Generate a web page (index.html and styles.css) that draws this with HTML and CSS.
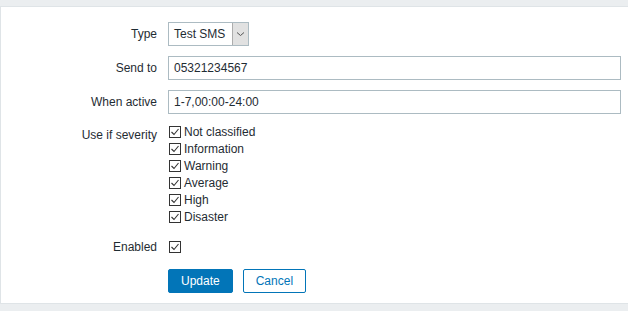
FILE: index.html
```html
<!DOCTYPE html>
<html lang="en">
<head>
    <meta charset="UTF-8">
    <title>Media</title>
    <link rel="stylesheet" href="styles.css">
</head>
<body>
    <div class="panel">
        <form class="form-list">
            <label class="form-label">Type</label>
            <div class="form-field">
                <span class="select">
                    <span class="select-value">Test SMS</span>
                    <span class="select-arrow">
                        <svg width="9" height="6" viewBox="0 0 9 6"><path d="M1 1.5 L4.5 4.5 L8 1.5" fill="none" stroke="#555" stroke-width="1"/></svg>
                    </span>
                </span>
            </div>

            <label class="form-label">Send to</label>
            <div class="form-field">
                <span class="text-input">05321234567</span>
            </div>

            <label class="form-label">When active</label>
            <div class="form-field">
                <span class="text-input">1-7,00:00-24:00</span>
            </div>

            <label class="form-label form-label-top">Use if severity</label>
            <ul class="checkbox-list">
                <li><span class="checkbox"><svg width="12" height="12" viewBox="0 0 12 12"><rect x="0.5" y="0.5" width="11" height="11" fill="#fff" stroke="#333"/><path d="M2.5 6 L5 8.5 L9.5 3" fill="none" stroke="#333" stroke-width="1.1"/></svg></span>Not classified</li>
                <li><span class="checkbox"><svg width="12" height="12" viewBox="0 0 12 12"><rect x="0.5" y="0.5" width="11" height="11" fill="#fff" stroke="#333"/><path d="M2.5 6 L5 8.5 L9.5 3" fill="none" stroke="#333" stroke-width="1.1"/></svg></span>Information</li>
                <li><span class="checkbox"><svg width="12" height="12" viewBox="0 0 12 12"><rect x="0.5" y="0.5" width="11" height="11" fill="#fff" stroke="#333"/><path d="M2.5 6 L5 8.5 L9.5 3" fill="none" stroke="#333" stroke-width="1.1"/></svg></span>Warning</li>
                <li><span class="checkbox"><svg width="12" height="12" viewBox="0 0 12 12"><rect x="0.5" y="0.5" width="11" height="11" fill="#fff" stroke="#333"/><path d="M2.5 6 L5 8.5 L9.5 3" fill="none" stroke="#333" stroke-width="1.1"/></svg></span>Average</li>
                <li><span class="checkbox"><svg width="12" height="12" viewBox="0 0 12 12"><rect x="0.5" y="0.5" width="11" height="11" fill="#fff" stroke="#333"/><path d="M2.5 6 L5 8.5 L9.5 3" fill="none" stroke="#333" stroke-width="1.1"/></svg></span>High</li>
                <li><span class="checkbox"><svg width="12" height="12" viewBox="0 0 12 12"><rect x="0.5" y="0.5" width="11" height="11" fill="#fff" stroke="#333"/><path d="M2.5 6 L5 8.5 L9.5 3" fill="none" stroke="#333" stroke-width="1.1"/></svg></span>Disaster</li>
            </ul>

            <label class="form-label">Enabled</label>
            <div class="form-field">
                <span class="checkbox"><svg width="12" height="12" viewBox="0 0 12 12"><rect x="0.5" y="0.5" width="11" height="11" fill="#fff" stroke="#333"/><path d="M2.5 6 L5 8.5 L9.5 3" fill="none" stroke="#333" stroke-width="1.1"/></svg></span>
            </div>

            <div></div>
            <div class="form-buttons">
                <button type="button" class="btn btn-primary">Update</button>
                <button type="button" class="btn btn-alt">Cancel</button>
            </div>
        </form>
    </div>
</body>
</html>
```

FILE: styles.css
```css
body {
    margin: 0;
    background-color: #ebeef0;
    font-family: "Liberation Sans", Arial, sans-serif;
    font-size: 12px;
    color: #1f2c33;
}
.panel {
    margin-top: 6px;
    background: #fff;
    border-top: 1px solid #dfe4e7;
    border-left: 1px solid #dfe4e7;
    border-bottom: 1px solid #dfe4e7;
    height: 298px;
    box-sizing: border-box;
    padding-top: 15px;
}
.form-list {
    display: grid;
    grid-template-columns: 156px 453px;
    column-gap: 11px;
    row-gap: 10px;
    margin: 0;
}
.form-label {
    text-align: right;
    line-height: 24px;
}
.form-label-top {
    line-height: 14px;
    padding-top: 4px;
}
.form-field {
    display: flex;
    align-items: center;
    height: 24px;
}
.select {
    display: flex;
    align-items: stretch;
    width: 81px;
    height: 24px;
    box-sizing: border-box;
    border: 1px solid #acbbc2;
    background: #fff;
}
.select-value {
    flex: 1;
    padding-left: 5px;
    line-height: 22px;
}
.select-arrow {
    width: 15px;
    display: flex;
    align-items: center;
    justify-content: center;
    background: #e1e1e1;
    border-left: 1px solid #adadad;
}
.text-input {
    display: block;
    width: 100%;
    height: 24px;
    box-sizing: border-box;
    border: 1px solid #acbbc2;
    padding-left: 5px;
    line-height: 22px;
}
.checkbox-list {
    list-style: none;
    margin: -1px 0 0;
    padding: 0;
}
.checkbox-list li {
    display: flex;
    align-items: center;
    height: 17px;
}
.checkbox {
    display: inline-flex;
    width: 12px;
    height: 12px;
    margin-left: 1px;
    margin-right: 3px;
}
.form-buttons {
    display: flex;
    gap: 10px;
}
.btn {
    height: 24px;
    padding: 0 12px;
    font-family: "Liberation Sans", Arial, sans-serif;
    font-size: 12px;
    border-radius: 2px;
    border: 1px solid #0275b8;
    cursor: pointer;
}
.btn-primary {
    background-color: #0275b8;
    color: #fff;
}
.btn-alt {
    background-color: #fff;
    color: #0275b8;
}
```
